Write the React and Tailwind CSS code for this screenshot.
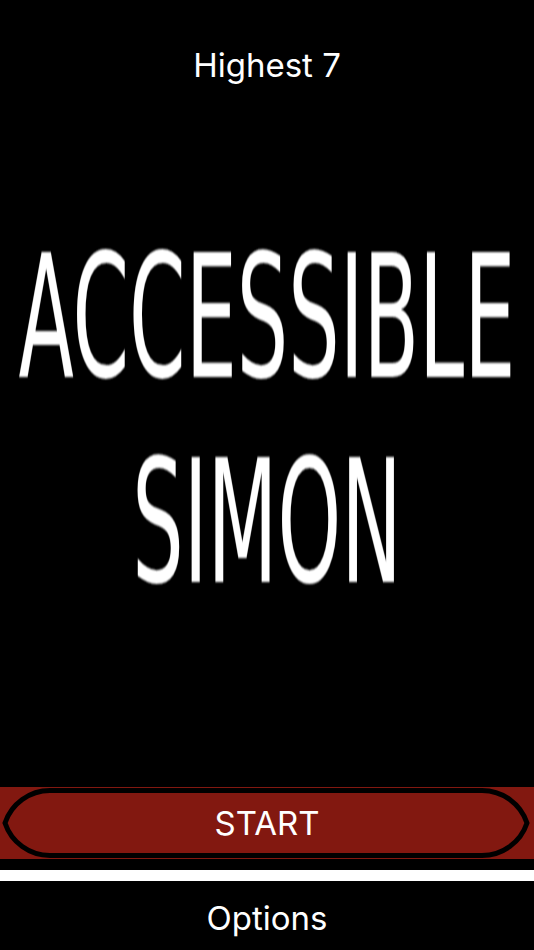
import React from 'react';

const sf = { fontFamily: 'Inter, "Liberation Sans", sans-serif' };

function StartOutline() {
  // pointed pill outline drawn over the red band
  return (
    <svg className="absolute inset-0 pointer-events-none" width="534" height="72" viewBox="0 0 534 72">
      <path
        d="M50 3.5 H482 A47.4 47.4 0 0 1 527 36 A47.4 47.4 0 0 1 482 68.5 H50 A47.4 47.4 0 0 1 5 36 A47.4 47.4 0 0 1 50 3.5 Z"
        fill="none"
        stroke="#000"
        strokeWidth="5"
      />
    </svg>
  );
}

export default function App() {
  return (
    <div className="w-[534px] h-[950px] bg-black flex flex-col overflow-hidden" style={sf}>
      <div className="pt-[45px] text-center text-white text-[33px] leading-[40px]">Highest 7</div>

      {/* title */}
      <div className="mt-[239px] h-[194px] flex justify-center">
        <div
          className="text-white text-center text-[81px] leading-[97px] scale-y-[2.115] origin-center blur-[0.6px] whitespace-nowrap"
          style={{ fontFamily: '"DejaVu Sans", Verdana, sans-serif' }}
        >
          <div>ACCESSIBLE</div>
          <div>SIMON</div>
        </div>
      </div>

      <div className="flex-1" />

      <button className="relative h-[72px] w-full bg-[#821810] flex items-center justify-center text-white text-[33px] leading-[40px]">
        <StartOutline />
        <span className="relative">START</span>
      </button>

      <div className="mt-[11px] h-[11px] bg-white" />

      <div className="h-[69px] pt-[17px] text-center text-white text-[33px] leading-[40px]">Options</div>
    </div>
  );
}
